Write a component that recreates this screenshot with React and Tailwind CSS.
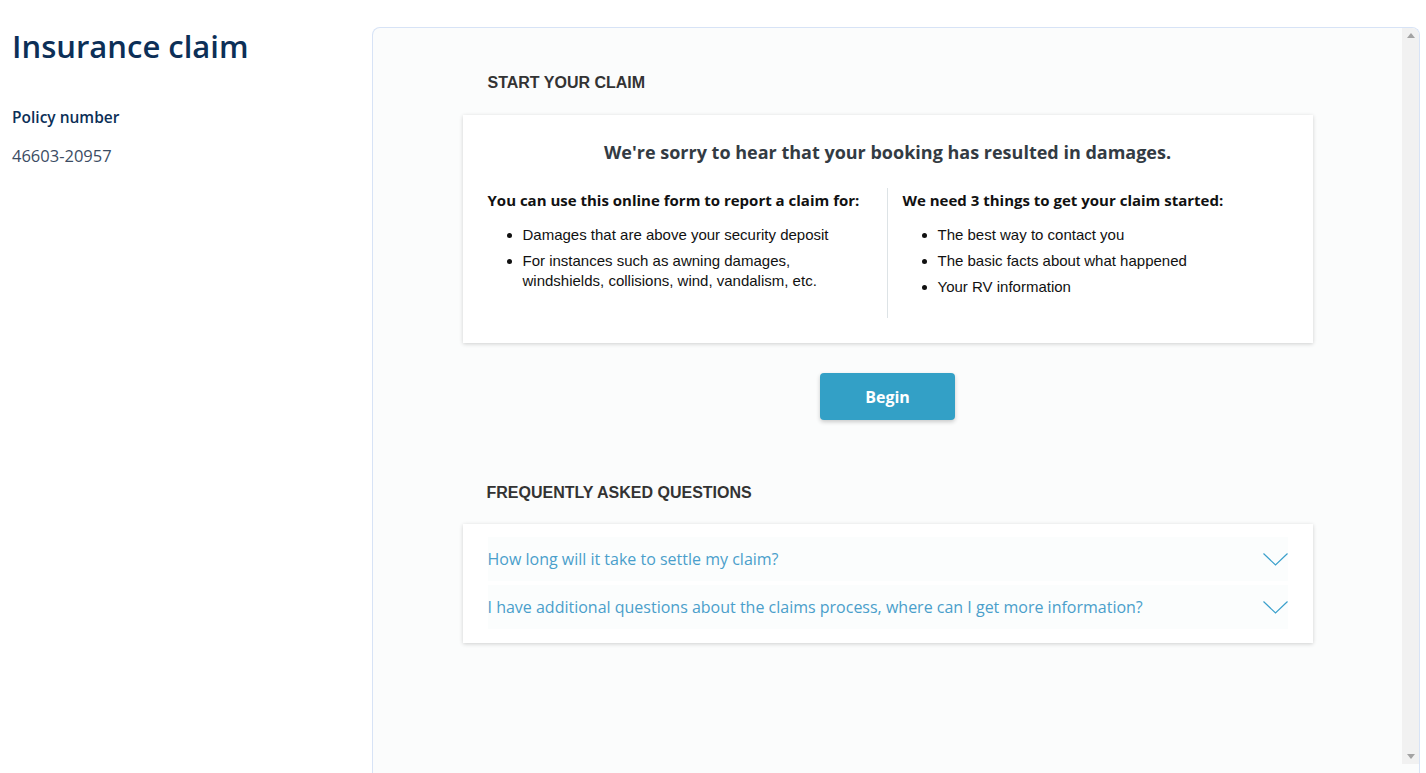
const openSans = { fontFamily: '"Open Sans", "Liberation Sans", sans-serif' };

function Chevron() {
    return (
        <svg width="25" height="13" viewBox="0 0 25 13" fill="none" className="shrink-0">
            <path d="M0.5 0.5 L12.5 12 L24.5 0.5" stroke="#3aa0cc" strokeWidth="1.2" />
        </svg>
    );
}

function FaqRow({ children }) {
    return (
        <div className="flex items-center justify-between h-[44px] bg-[#fbfdfd] text-[16px] text-[#4a9fcb] font-['Open_Sans',sans-serif]">
            <span>{children}</span>
            <Chevron />
        </div>
    );
}

export default function App() {
    return (
        <div className="w-[1426px] h-[773px] overflow-hidden bg-white flex font-['Liberation_Sans',Arial,sans-serif]">
            <aside className="w-[372px] shrink-0 pl-3 pt-[26px] font-['Open_Sans',sans-serif]">
                <h1 className="text-[31px] font-semibold text-[#0c2f57] leading-[40px]">Insurance claim</h1>
                <p className="mt-[41px] text-[15.5px] font-semibold text-[#0c2f57] leading-[20px]">Policy number</p>
                <p className="mt-[19px] text-[16.5px] text-[#3b4c63] leading-[20px]">46603-20957</p>
            </aside>

            <main className="mt-[27px] mr-[6px] flex-1 flex border border-b-0 border-[#d7e3f6] rounded-tl-[8px] rounded-tr-[8px] bg-[#fbfcfc]">
                <div className="flex-1 pt-[46px]">
                    <div className="w-[850px] mx-auto">
                        <h2 className="pl-[25px] text-[16px] font-bold text-[#333] leading-[18px]">START YOUR CLAIM</h2>

                        <section className="mt-[23px] bg-white shadow-[0_1px_4px_rgba(0,0,0,0.18)] px-[25px] pt-[24px] pb-[25px]">
                            <h3 style={openSans} className="text-center text-[18px] font-bold text-[#333b43] leading-[26px]">
                                We're sorry to hear that your booking has resulted in damages.
                            </h3>
                            <div className="mt-[23px] grid grid-cols-2">
                                <div className="border-r border-[#dde3e6] min-h-[130px]">
                                    <h4 style={openSans} className="text-[15px] font-bold text-[#111] leading-[24px]">
                                        You can use this online form to report a claim for:
                                    </h4>
                                    <ul className="mt-[13px] pl-[35px] list-disc text-[15px] text-[#111] leading-[20px] space-y-[6px] pr-6">
                                        <li>Damages that are above your security deposit</li>
                                        <li>For instances such as awning damages, windshields, collisions, wind, vandalism, etc.</li>
                                    </ul>
                                </div>
                                <div className="pl-[15px]">
                                    <h4 style={openSans} className="text-[15px] font-bold text-[#111] leading-[24px]">
                                        We need 3 things to get your claim started:
                                    </h4>
                                    <ul className="mt-[13px] pl-[35px] list-disc text-[15px] text-[#111] leading-[20px] space-y-[6px]">
                                        <li>The best way to contact you</li>
                                        <li>The basic facts about what happened</li>
                                        <li>Your RV information</li>
                                    </ul>
                                </div>
                            </div>
                        </section>

                        <div className="mt-[30px] flex justify-center">
                            <button style={openSans} className="w-[135px] h-[47px] rounded-[4px] bg-[#33a0c6] text-white text-[16px] font-bold shadow-[0_2px_4px_rgba(0,0,0,0.2)]">
                                Begin
                            </button>
                        </div>

                        <h2 className="mt-[64px] pl-[24px] text-[16px] font-bold text-[#333] leading-[18px]">FREQUENTLY ASKED QUESTIONS</h2>

                        <section className="mt-[22px] bg-white shadow-[0_1px_4px_rgba(0,0,0,0.18)] px-[25px] pt-[13px] pb-[14px] space-y-[4px]">
                            <FaqRow>How long will it take to settle my claim?</FaqRow>
                            <FaqRow>I have additional questions about the claims process, where can I get more information?</FaqRow>
                        </section>
                    </div>
                </div>

                <div className="w-[17px] shrink-0 h-[736px] bg-[#f1f1f1] rounded-tr-[7px] flex flex-col justify-between items-center py-[5px]">
                    <svg width="8" height="5" viewBox="0 0 8 5"><path d="M0 5 L4 0 L8 5 Z" fill="#a3a3a3" /></svg>
                    <svg width="8" height="5" viewBox="0 0 8 5"><path d="M0 0 L4 5 L8 0 Z" fill="#a3a3a3" /></svg>
                </div>
            </main>
        </div>
    );
}
